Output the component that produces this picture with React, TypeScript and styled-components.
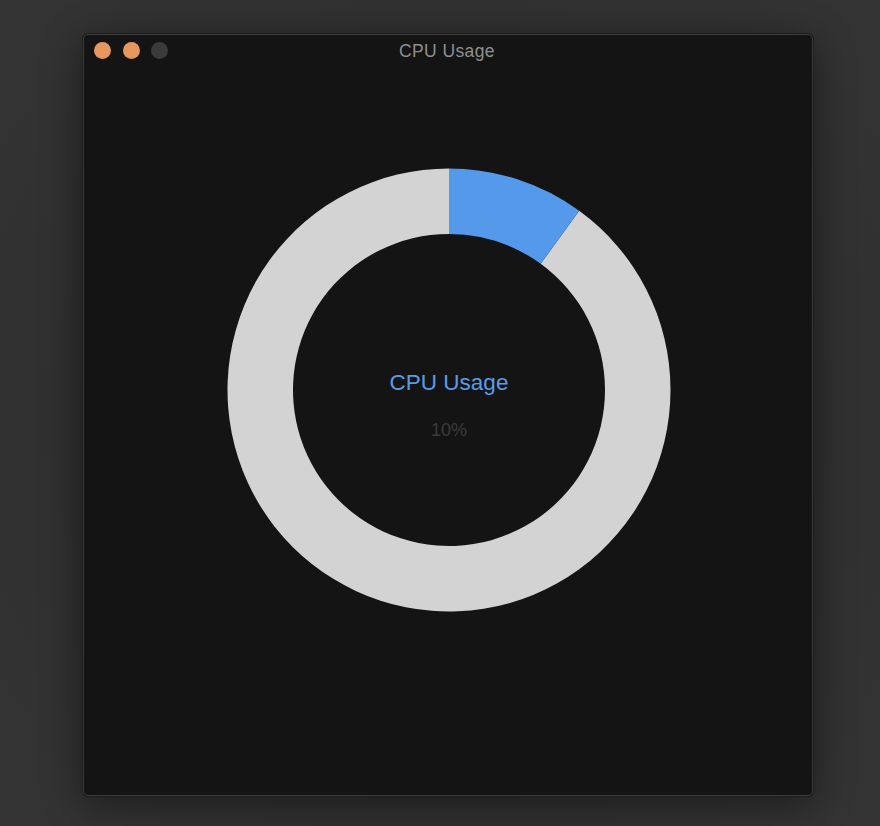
import React from "react";
import styled, { createGlobalStyle } from "styled-components";

const Global = createGlobalStyle`
  html, body { margin: 0; padding: 0; background: #333333; }
  body { font-family: "Liberation Sans", Arial, sans-serif; }
`;

const Desktop = styled.div`
  width: 880px;
  height: 826px;
  box-sizing: border-box;
  padding: 34px 0 0 83px;
  background: radial-gradient(ellipse at 50% 50%, #2c2c2c 0%, #303030 60%, #343434 100%);
`;

const Window = styled.div`
  width: 730px;
  height: 762px;
  box-sizing: border-box;
  background: #141414;
  border: 1px solid #3c3c3c;
  border-radius: 5px;
  box-shadow: 0 0 0 1px #1c1c1c, 0 8px 40px rgba(0, 0, 0, 0.45);
  display: flex;
  flex-direction: column;
`;

const TitleBar = styled.div`
  height: 30px;
  display: grid;
  grid-template-columns: 1fr auto 1fr;
  align-items: center;
  padding: 0 10px;
`;

const Lights = styled.div`
  display: flex;
  gap: 11.5px;
  align-items: center;
`;

const Light = styled.span<{ $c: string }>`
  width: 17px;
  height: 17px;
  border-radius: 50%;
  background: ${(p) => p.$c};
`;

const Title = styled.div`
  color: #8f8f8f;
  font-size: 17.5px;
  letter-spacing: 0.4px;
  transform: translate(-1px, 1px);
`;

const ChartArea = styled.div`
  display: flex;
  justify-content: center;
  padding: 103px 0 0 2px;
`;

const CX = 222;
const R_OUT = 221.5;
const R_IN = 156;

function arcPath(a0: number, a1: number) {
  const p = (r: number, a: number) => {
    const t = ((a - 90) * Math.PI) / 180;
    return [CX + r * Math.cos(t), CX + r * Math.sin(t)];
  };
  const large = a1 - a0 > 180 ? 1 : 0;
  const [x0, y0] = p(R_OUT, a0);
  const [x1, y1] = p(R_OUT, a1);
  const [x2, y2] = p(R_IN, a1);
  const [x3, y3] = p(R_IN, a0);
  return `M${x0} ${y0} A${R_OUT} ${R_OUT} 0 ${large} 1 ${x1} ${y1} L${x2} ${y2} A${R_IN} ${R_IN} 0 ${large} 0 ${x3} ${y3} Z`;
}

const Donut = ({ value }: { value: number }) => {
  const a = (value / 100) * 360;
  return (
    <svg width={444} height={444} viewBox="0 0 444 444">
      <path d={arcPath(a, 359.999)} fill="#d3d3d3" />
      <path d={arcPath(0, a)} fill="#5499ea" />
      <text
        x={CX}
        y={222}
        textAnchor="middle"
        fill="#5a9ce8"
        fontSize={22.5}
        fontFamily="Liberation Sans, Arial, sans-serif"
      >
        CPU Usage
      </text>
      <text
        x={CX}
        y={268}
        textAnchor="middle"
        fill="#3b3b3b"
        fontSize={18}
        fontFamily="Liberation Sans, Arial, sans-serif"
      >
        {value}%
      </text>
    </svg>
  );
};

export default function App() {
  return (
    <>
      <Global />
      <Desktop>
        <Window>
          <TitleBar>
            <Lights>
              <Light $c="#e5975d" />
              <Light $c="#e5975d" />
              <Light $c="#3b3b3b" />
            </Lights>
            <Title>CPU Usage</Title>
            <div />
          </TitleBar>
          <ChartArea>
            <Donut value={10} />
          </ChartArea>
        </Window>
      </Desktop>
    </>
  );
}
